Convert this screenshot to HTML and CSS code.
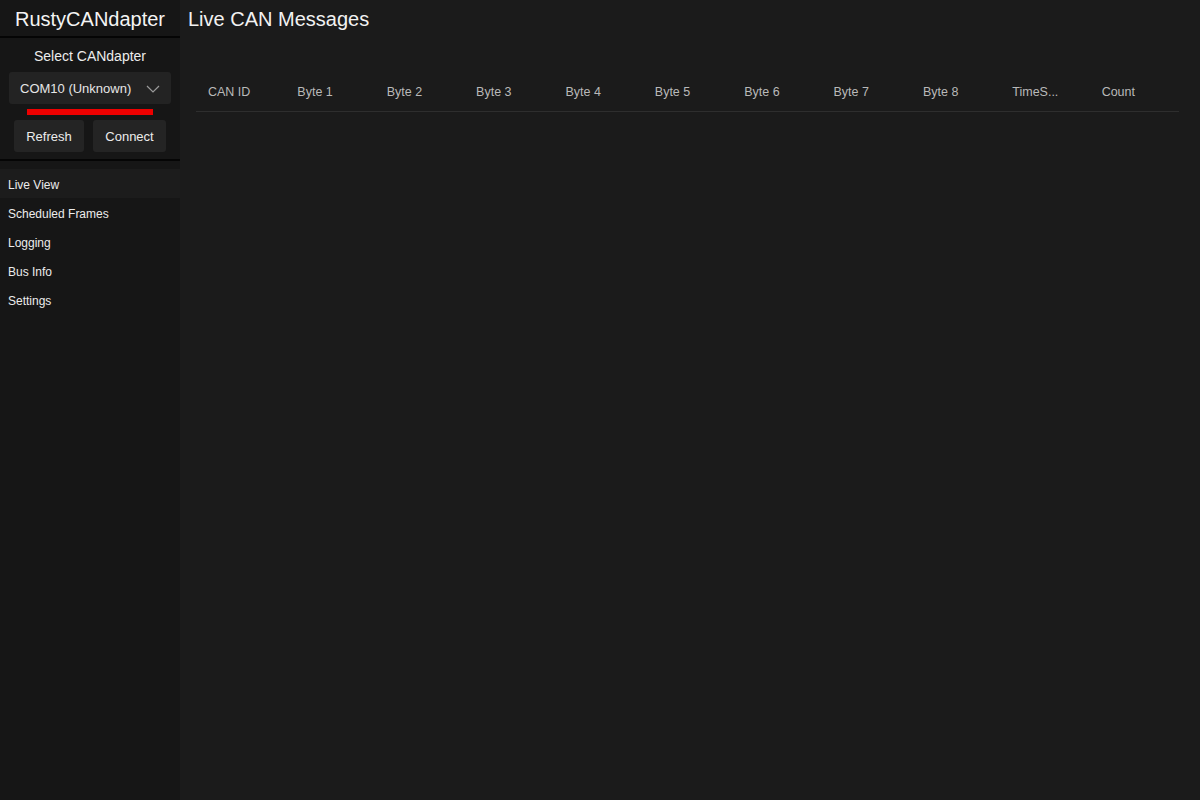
FILE: index.html
```html
<!DOCTYPE html>
<html>
<head>
<meta charset="utf-8">
<link rel="stylesheet" href="styles.css">
</head>
<body>
<div class="app">
  <aside class="sidebar">
    <div class="brand">RustyCANdapter</div>
    <div class="device">
      <div class="device-label">Select CANdapter</div>
      <div class="select">
        <span>COM10 (Unknown)</span>
        <svg class="chev" width="14" height="8" viewBox="0 0 14 8"><path d="M1 1 L7 7 L13 1" fill="none" stroke="#9a9a9a" stroke-width="1.2"/></svg>
      </div>
      <div class="status-bar"></div>
      <div class="buttons">
        <button class="btn refresh">Refresh</button>
        <button class="btn connect">Connect</button>
      </div>
    </div>
    <nav class="nav">
      <div class="nav-item active">Live View</div>
      <div class="nav-item">Scheduled Frames</div>
      <div class="nav-item">Logging</div>
      <div class="nav-item">Bus Info</div>
      <div class="nav-item">Settings</div>
    </nav>
  </aside>
  <main class="main">
    <h1 class="title">Live CAN Messages</h1>
    <div class="table">
      <div class="thead">
        <div class="th">CAN ID</div>
        <div class="th">Byte 1</div>
        <div class="th">Byte 2</div>
        <div class="th">Byte 3</div>
        <div class="th">Byte 4</div>
        <div class="th">Byte 5</div>
        <div class="th">Byte 6</div>
        <div class="th">Byte 7</div>
        <div class="th">Byte 8</div>
        <div class="th">TimeS...</div>
        <div class="th">Count</div>
      </div>
    </div>
  </main>
</div>
</body>
</html>
```
FILE: styles.css
```css
* { box-sizing: border-box; }
html, body {
  margin: 0;
  padding: 0;
  height: 100%;
  background: #1b1b1b;
  font-family: "Liberation Sans", Arial, sans-serif;
  color: #ececec;
}
.app {
  display: flex;
  height: 800px;
}
.sidebar {
  width: 180px;
  flex: none;
  background: #161616;
  display: flex;
  flex-direction: column;
}
.brand {
  height: 38px;
  font-size: 20px;
  line-height: 38px;
  text-align: center;
  color: #f4f4f4;
  border-bottom: 2px solid #050505;
}
.device {
  padding: 9px 9px 7px;
  border-bottom: 2px solid #050505;
  display: flex;
  flex-direction: column;
  align-items: center;
}
.device-label {
  font-size: 14px;
  line-height: 18px;
  color: #ececec;
  margin-bottom: 7px;
}
.select {
  width: 162px;
  height: 32px;
  background: #232323;
  border-radius: 3px;
  display: flex;
  align-items: center;
  justify-content: space-between;
  padding: 0 11px 0 11px;
  font-size: 13px;
  color: #e6e6e6;
}
.chev { margin-top: 1px; }
.status-bar {
  width: 126px;
  height: 6px;
  background: #ee0000;
  margin: 5px 0 5px;
}
.buttons {
  display: flex;
  gap: 9px;
}
.btn {
  height: 32px;
  background: #242424;
  border: none;
  border-radius: 3px;
  color: #ececec;
  font-family: inherit;
  font-size: 13px;
  padding: 0;
}
.refresh { width: 70px; }
.connect { width: 73px; }
.nav {
  padding-top: 8px;
  display: flex;
  flex-direction: column;
}
.nav-item {
  height: 29px;
  line-height: 32px;
  padding-left: 8px;
  font-size: 12px;
  color: #ececec;
}
.nav-item.active {
  background: #1c1c1c;
}
.main {
  flex: 1;
  padding: 0 21px 0 8px;
}
.title {
  margin: 0;
  height: 38px;
  line-height: 38px;
  font-size: 20px;
  font-weight: normal;
  color: #f2f2f2;
}
.table {
  margin-top: 34px;
  margin-left: 8px;
}
.thead {
  display: grid;
  grid-template-columns: repeat(11, 1fr);
  height: 40px;
  border-bottom: 1px solid #2e2e2e;
  align-items: center;
}
.th {
  padding-left: 12px;
  font-size: 12.5px;
  color: #b9b9b9;
}
```
